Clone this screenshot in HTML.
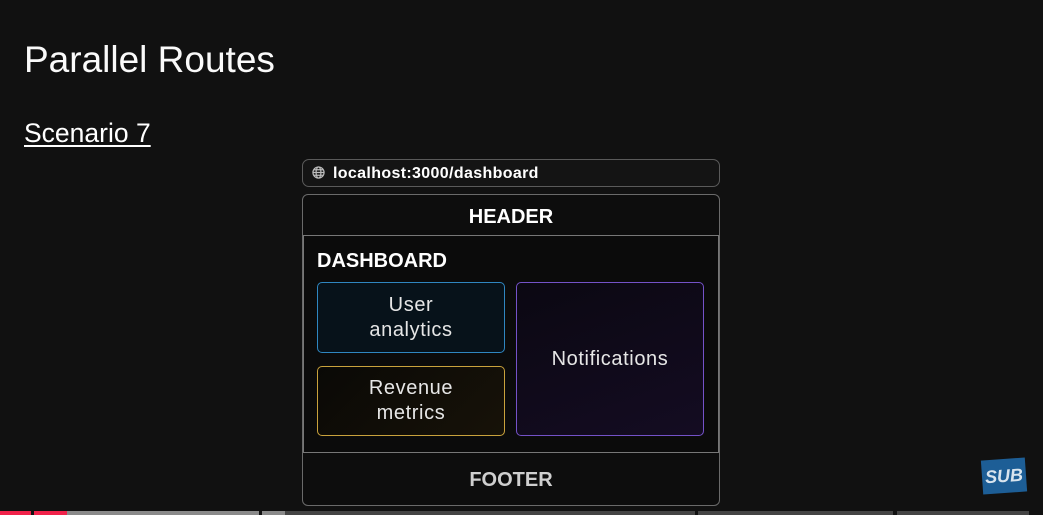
<!DOCTYPE html>
<html><head><style>
*{margin:0;padding:0;box-sizing:border-box}
body{width:1043px;height:515px;background:#111111;position:relative;overflow:hidden;font-family:"Liberation Sans",sans-serif;color:#fff}
.a{position:absolute}
.t1{left:24px;top:39px;font-size:37px;color:#fafafa}
.t2{left:24px;top:118px;font-size:26.5px;text-decoration:underline;text-underline-offset:3px;text-decoration-thickness:2px}
.url{left:302px;top:159px;width:418px;height:28px;border:1px solid #5a5a5a;border-radius:7px;background:#141414;font-weight:bold;font-size:16px;letter-spacing:0.35px;padding-left:30px;line-height:27px}
.box{left:302px;top:194px;width:418px;height:312px;border:1.5px solid #6a6a6a;border-radius:6px;background:#0d0d0d}
.hdr{left:302px;top:194px;width:418px;height:41px;text-align:center;font-weight:bold;font-size:20px;line-height:46px}
.dash{left:303px;top:235px;width:416px;height:218px;border:1.5px solid #777;background:#0b0b0b}
.dl{left:317px;top:250px;font-weight:bold;font-size:20px}
.card{border-radius:5px;display:flex;align-items:center;justify-content:center;text-align:center;font-size:20px;letter-spacing:0.6px;line-height:25px;color:#e6e6e6}
.ftr{left:302px;top:453px;width:418px;height:52px;text-align:center;font-weight:bold;font-size:20px;line-height:54px;color:#cfcfcf}
.bar{top:511px;height:4px}
</style></head><body>
<div class="a t1">Parallel Routes</div>
<div class="a t2">Scenario 7</div>
<div class="a url">localhost:3000/dashboard</div>
<svg class="a" style="left:312px;top:166px" width="13" height="13" viewBox="0 0 14 14" fill="none" stroke="#bbb" stroke-width="1.3"><circle cx="7" cy="7" r="6"/><ellipse cx="7" cy="7" rx="2.6" ry="6"/><path d="M1 7h12M2 4h10M2 10h10"/></svg>
<div class="a box"></div>
<div class="a hdr">HEADER</div>
<div class="a dash"></div>
<div class="a dl">DASHBOARD</div>
<div class="a card" style="left:317px;top:282px;width:188px;height:71px;border:1.5px solid #2f86c0;background:#07121a">User<br>analytics</div>
<div class="a card" style="left:317px;top:366px;width:188px;height:70px;border:1.5px solid #c9a23c;background:linear-gradient(135deg,#0a0906,#171208)">Revenue<br>metrics</div>
<div class="a card" style="left:516px;top:282px;width:188px;height:154px;border:1.5px solid #7452c8;background:linear-gradient(160deg,#0b0812,#140c22)">Notifications</div>
<div class="a ftr">FOOTER</div>
<div class="a" style="left:982px;top:459px;width:44px;height:34px;background:#1d5e96;transform:rotate(-4deg);color:#d8e4ee;font-weight:bold;font-style:italic;font-size:18px;line-height:34px;text-align:center">SUB</div>
<div class="a bar" style="left:0;width:31px;background:#f0224a"></div>
<div class="a bar" style="left:34px;width:33px;background:#f0224a"></div>
<div class="a bar" style="left:67px;width:192px;background:#8a8a8a"></div>
<div class="a bar" style="left:262px;width:23px;background:#8a8a8a"></div>
<div class="a bar" style="left:285px;width:410px;background:#444"></div>
<div class="a bar" style="left:698px;width:195px;background:#444"></div>
<div class="a bar" style="left:897px;width:132px;background:#444"></div>
</body></html>
